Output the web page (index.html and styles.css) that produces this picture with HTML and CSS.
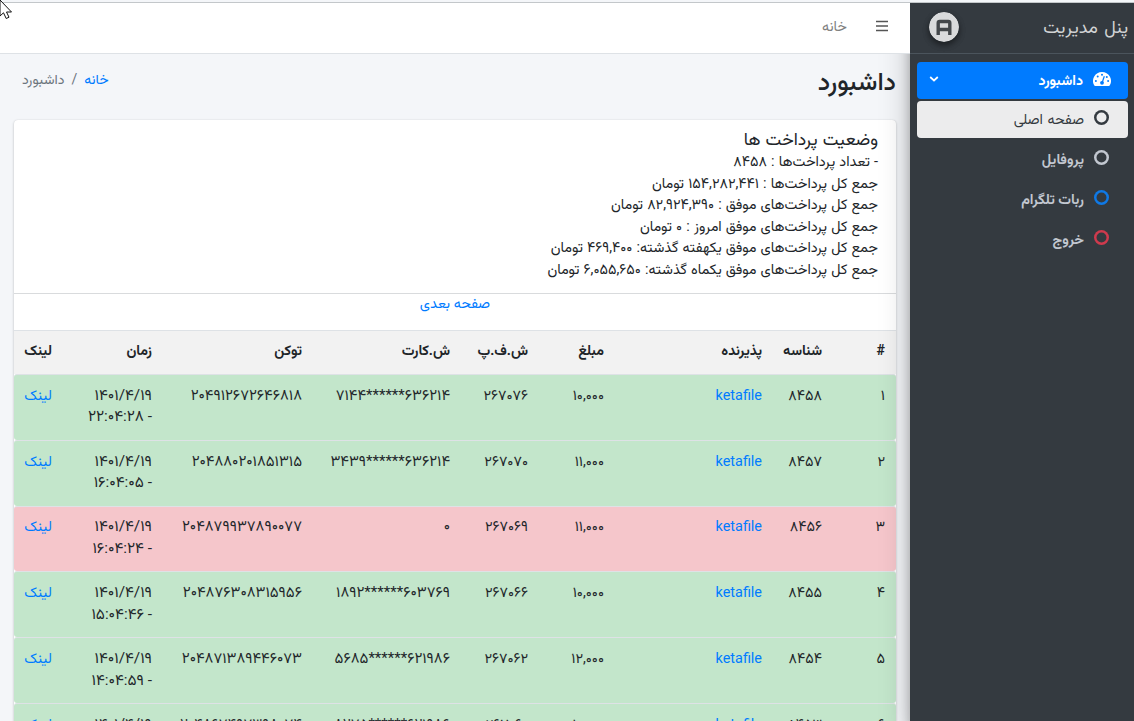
FILE: index.html
```
<!DOCTYPE html>
<html lang="fa" dir="rtl">
<head>
    <meta charset="UTF-8" />
    <meta name="viewport" content="width=device-width, initial-scale=1.0" />
    <title>پنل مدیریت</title>
    <link rel="stylesheet" href="styles.css">
</head>
<body>
    <div class="wrapper">
        <aside class="sidebar">
            <a class="brand">
                <span class="brand-text">پنل مدیریت</span>
                <svg class="brand-logo" viewBox="0 0 30 30">
                    <circle cx="15" cy="15" r="15" fill="#d9dadb" />
                    <path d="M9.200 23V11Q9.200 9.500 10.700 9.500H19.300Q20.800 9.500 20.800 11V23M9 17.500H21" fill="none" stroke="#43474a" stroke-width="3.400" />
                </svg>
            </a>
            <nav class="menu">
                <a class="menu-item active">
                    <svg class="icon-dash" viewBox="0 0 18 16">
                        <path d="M9 1A9 9 0 0 0 1.300 14.600Q1.600 15 2.100 15H15.900Q16.400 15 16.700 14.600A9 9 0 0 0 9 1Z" fill="#fff" />
                        <g fill="#007bff">
                            <circle cx="9" cy="3.700" r="1" />
                            <circle cx="4.700" cy="5.600" r="1" />
                            <circle cx="2.900" cy="10" r="1" />
                            <circle cx="15.100" cy="10" r="1" />
                            <circle cx="13.800" cy="6" r="1" />
                            <circle cx="9" cy="11.800" r="1.900" />
                        </g>
                        <path d="M9.200 11.500L11.300 5.200" stroke="#007bff" stroke-width="1.200" />
                    </svg>
                    <span>داشبورد</span>
                    <svg class="chevron" viewBox="0 0 10 6"><path d="M1.200 1L5 4.500L8.800 1" fill="none" stroke="#fff" stroke-width="1.700" /></svg>
                </a>
                <a class="menu-item sub"><i class="ring"></i><span>صفحه اصلی</span></a>
                <a class="menu-item"><i class="ring"></i><span>پروفایل</span></a>
                <a class="menu-item"><i class="ring ring-blue"></i><span>ربات تلگرام</span></a>
                <a class="menu-item"><i class="ring ring-red"></i><span>خروج</span></a>
            </nav>
        </aside>

        <div class="main">
            <header class="navbar">
                <svg class="bars" viewBox="0 0 12 12"><path d="M0 1.500H12M0 6H12M0 10.500H12" stroke="#555" stroke-width="1.700" /></svg>
                <a>خانه</a>
            </header>

            <div class="content-header">
                <h1>داشبورد</h1>
                <div class="breadcrumb">
                    <a>خانه</a>
                    <span class="sep">/</span>
                    <span>داشبورد</span>
                </div>
            </div>

            <section class="card">
                <div class="card-header">
                    <h3>وضعیت پرداخت ها</h3>
                    <p>- تعداد پرداخت‌ها : ۸۴۵۸</p>
                    <p>جمع کل پرداخت‌ها : ۱۵۴,۲۸۲,۴۴۱ تومان</p>
                    <p>جمع کل پرداخت‌های موفق : ۸۲,۹۲۴,۳۹۰ تومان</p>
                    <p>جمع کل پرداخت‌های موفق امروز : ۰ تومان</p>
                    <p>جمع کل پرداخت‌های موفق یکهفته گذشته: ۴۶۹,۴۰۰ تومان</p>
                    <p>جمع کل پرداخت‌های موفق یکماه گذشته: ۶,۰۵۵,۶۵۰ تومان</p>
                </div>
                <div class="pager"><a>صفحه بعدی</a></div>
                <table>
                    <colgroup>
                        <col class="c-num"><col class="c-id"><col class="c-merchant"><col class="c-amount"><col class="c-sfp"><col class="c-card"><col class="c-token"><col class="c-time"><col class="c-link">
                    </colgroup>
                    <thead>
                        <tr><th>#</th><th>شناسه</th><th>پذیرنده</th><th>مبلغ</th><th>ش.ف.پ</th><th>ش.کارت</th><th>توکن</th><th>زمان</th><th>لینک</th></tr>
                    </thead>
                    <tbody>
                        <tr class="success">
                            <td>۱</td><td>۸۴۵۸</td><td><a>ketafile</a></td><td>۱۰,۰۰۰</td><td>۲۶۷۰۷۶</td><td class="long">۶۳۶۲۱۴******۷۱۴۴</td><td class="long">۲۰۴۹۱۲۶۷۲۶۴۶۸۱۸</td><td class="time">۱۴۰۱/۴/۱۹<br>- ۲۲:۰۴:۲۸</td><td><a>لینک</a></td>
                        </tr>
                        <tr class="success">
                            <td>۲</td><td>۸۴۵۷</td><td><a>ketafile</a></td><td>۱۱,۰۰۰</td><td>۲۶۷۰۷۰</td><td class="long">۶۳۶۲۱۴******۳۴۳۹</td><td class="long">۲۰۴۸۸۰۲۰۱۸۵۱۳۱۵</td><td class="time">۱۴۰۱/۴/۱۹<br>- ۱۶:۰۴:۰۵</td><td><a>لینک</a></td>
                        </tr>
                        <tr class="danger">
                            <td>۳</td><td>۸۴۵۶</td><td><a>ketafile</a></td><td>۱۱,۰۰۰</td><td>۲۶۷۰۶۹</td><td class="long">۰</td><td class="long">۲۰۴۸۷۹۹۳۷۸۹۰۰۷۷</td><td class="time">۱۴۰۱/۴/۱۹<br>- ۱۶:۰۴:۲۴</td><td><a>لینک</a></td>
                        </tr>
                        <tr class="success">
                            <td>۴</td><td>۸۴۵۵</td><td><a>ketafile</a></td><td>۱۰,۰۰۰</td><td>۲۶۷۰۶۶</td><td class="long">۶۰۳۷۶۹******۱۸۹۲</td><td class="long">۲۰۴۸۷۶۳۰۸۳۱۵۹۵۶</td><td class="time">۱۴۰۱/۴/۱۹<br>- ۱۵:۰۴:۴۶</td><td><a>لینک</a></td>
                        </tr>
                        <tr class="success">
                            <td>۵</td><td>۸۴۵۴</td><td><a>ketafile</a></td><td>۱۲,۰۰۰</td><td>۲۶۷۰۶۲</td><td class="long">۶۲۱۹۸۶******۵۶۸۵</td><td class="long">۲۰۴۸۷۱۳۸۹۴۴۶۰۷۳</td><td class="time">۱۴۰۱/۴/۱۹<br>- ۱۴:۰۴:۵۹</td><td><a>لینک</a></td>
                        </tr>
                        <tr class="success">
                            <td>۶</td><td>۸۴۵۳</td><td><a>ketafile</a></td><td>۱۰,۰۰۰</td><td>۲۶۷۰۶۰</td><td class="long">۶۲۱۹۸۶******۸۲۷۵</td><td class="long">۲۰۴۸۶۷۴۹۷۳۹۸۰۷۴</td><td class="time">۱۴۰۱/۴/۱۹<br>- ۱۴:۰۴:۳۱</td><td><a>لینک</a></td>
                        </tr>
                    </tbody>
                </table>
            </section>
        </div>
    </div>
    <svg class="cursor" viewBox="0 0 13 20"><path d="M0 0V16L3.500 12.800L6.200 18.500L9 17.200L6.500 12H11.500Z" fill="#fff" stroke="#111" /></svg>
</body>
</html>
```
FILE: styles.css
```
* {
    box-sizing: border-box;
    margin: 0;
    padding: 0;
}
html {
    font-size: 14.4px;
}
body {
    height: 721px;
    overflow: hidden;
    background: #f4f6f9;
    color: #212529;
    font-family: Roboto, Vazirmatn, Vazir, "DejaVu Sans", sans-serif;
    font-size: 1rem;
    line-height: 21.6px;
}
a {
    color: #007bff;
    text-decoration: none;
}
.wrapper {
    display: flex;
    height: 719px;
    overflow: hidden;
    border-top: 1px solid #c3c7ca;
    margin-top: 2px;
}

/* sidebar */
.sidebar {
    width: 224px;
    flex: none;
    background: #343a40;
    box-shadow: 0 14px 28px rgba(0, 0, 0, .25), 0 10px 10px rgba(0, 0, 0, .22);
    position: relative;
    z-index: 2;
}
.brand {
    display: flex;
    justify-content: space-between;
    align-items: center;
    height: 51px;
    padding: 0 6px 2px 19px;
    border-bottom: 1px solid #4b545c;
    color: #d1d3d4;
    font-size: 18px;
    word-spacing: 2px;
}
.brand-logo {
    width: 30px;
    height: 30px;
    border-radius: 50%;
    box-shadow: 0 3px 6px rgba(0, 0, 0, .3), 0 3px 6px rgba(0, 0, 0, .25);
}
.menu {
    display: flex;
    flex-direction: column;
    gap: 3px;
    padding: 8px 6px 0 7px;
}
.menu-item {
    display: flex;
    align-items: center;
    gap: 10px;
    height: 37px;
    padding: 0 19px 0 12px;
    border-radius: 4px;
    color: #c2c7d0;
    font-weight: bold;
    font-size: 14.2px;
}
.menu-item.active {
    background: #007bff;
    color: #fff;
    padding-right: 17px;
    gap: 10px;
    margin-bottom: -1px;
}
.menu-item.sub {
    background: #ececed;
    color: #343a40;
    font-weight: normal;
    font-size: 14.4px;
    word-spacing: 1px;
}
.icon-dash {
    width: 18px;
    height: 16px;
    margin-bottom: 3px;
}
.chevron {
    width: 10px;
    height: 6px;
    margin-right: auto;
    margin-bottom: 3px;
}
.ring {
    width: 15px;
    height: 15px;
    margin-bottom: 4px;
    border-radius: 50%;
    box-shadow: inset 0 0 0 2.5px currentColor;
}
.ring-blue {
    color: #0f79e6;
}
.ring-red {
    color: #cf3a4d;
}

/* main */
.main {
    flex: 1;
    min-width: 0;
}
.navbar {
    display: flex;
    align-items: center;
    gap: 29px;
    height: 51px;
    padding: 0 22px 4px;
    background: #fff;
    border-bottom: 1px solid #dee2e6;
    position: relative;
    z-index: 3;
}
.navbar a {
    color: #808080;
    padding-top: 2px;
}
.bars {
    width: 12px;
    height: 12px;
}
.content-header {
    display: flex;
    justify-content: space-between;
    height: 66px;
    padding: 13px 14px 0 22px;
}
h1 {
    font-size: 25.3px;
    font-weight: 500;
    line-height: 30px;
}
.breadcrumb {
    display: flex;
    gap: 7px;
    height: 22px;
    padding-top: 2px;
    color: #6c757d;
    font-size: 14px;
}

.card {
    margin: 0 14px;
    background: #fff;
    border-radius: 4px;
    box-shadow: 0 0 1px rgba(0, 0, 0, .125), 0 1px 3px rgba(0, 0, 0, .2);
}
.card-header {
    height: 174px;
    padding: 8px 18px 0;
    border-bottom: 1px solid #d9dbdd;
    white-space: nowrap;
    word-spacing: .6px;
}
h3 {
    font-size: 17.6px;
    font-weight: normal;
    line-height: 22px;
    margin-bottom: 1px;
}
.pager {
    height: 36px;
    line-height: 20px;
    text-align: center;
}
table {
    width: 882px;
    table-layout: fixed;
    border-collapse: separate;
    border-spacing: 0;
}
.c-num { width: 63px; }
.c-id { width: 60px; }
.c-merchant { width: 158px; }
.c-amount { width: 76px; }
.c-sfp { width: 78px; }
.c-card { width: 148px; }
.c-token { width: 150px; }
.c-time { width: 100px; }
.c-link { width: 49px; }
th,
td {
    padding: 9.8px 11px;
    text-align: right;
    vertical-align: top;
    white-space: nowrap;
    border-top: 1px solid #dee2e6;
}
th {
    height: 44px;
    padding-top: 9px;
    background: #f2f2f2;
    font-size: 14.2px;
}
td {
    height: 65.8px;
}
.long {
    font-size: 15px;
}
.time {
    font-size: 15.4px;
}
.success td {
    background: #c3e6cb;
}
.danger td {
    background: #f5c6cb;
}
td:first-child {
    border-radius: 0 3px 3px 0;
}
td:last-child {
    border-radius: 3px 0 0 3px;
}
.cursor {
    position: absolute;
    top: 0;
    left: 0;
    width: 13px;
    height: 20px;
    z-index: 9;
}
```
